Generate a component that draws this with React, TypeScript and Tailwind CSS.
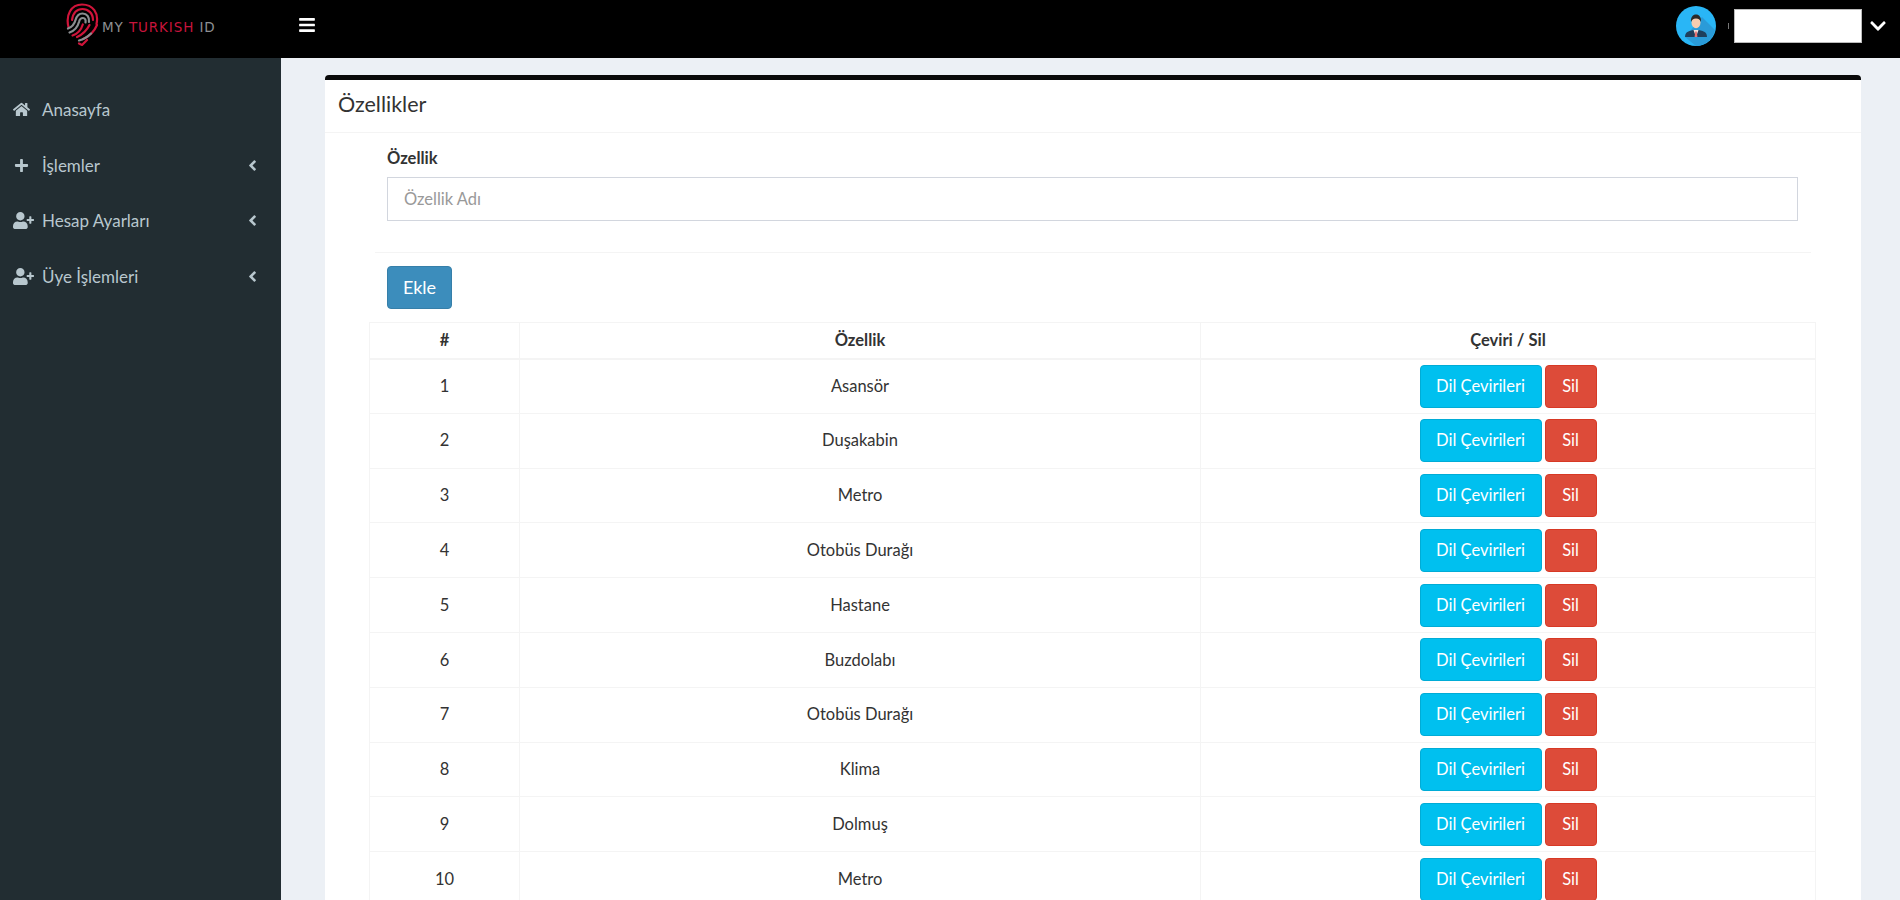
import { FaBars, FaChevronDown, FaHome, FaPlus, FaUserPlus, FaAngleLeft } from "react-icons/fa"

const features = [
    "Asansör",
    "Duşakabin",
    "Metro",
    "Otobüs Durağı",
    "Hastane",
    "Buzdolabı",
    "Otobüs Durağı",
    "Klima",
    "Dolmuş",
    "Metro",
]

const menu = [
    { label: "Anasayfa", icon: <FaHome className="text-[17px]" />, arrow: false },
    { label: "İşlemler", icon: <FaPlus className="text-[15px] ml-px" />, arrow: true },
    { label: "Hesap Ayarları", icon: <FaUserPlus className="text-[21px]" />, arrow: true },
    { label: "Üye İşlemleri", icon: <FaUserPlus className="text-[21px]" />, arrow: true },
]

function Logo() {
    return (
        <div className="flex items-center">
            <svg width="33" height="43" viewBox="0 0 33 43" fill="none" strokeLinecap="round" strokeWidth="2.200">
                {/* red outer ridges */}
                <path d="M2.500 24C-.5 12 5 1.500 16 1.500S33 10 30.500 21" stroke="#d0143a" />
                <path d="M6 17C7 10 11 6 16.500 6S27 10 27 17" stroke="#d0143a" />
                {/* grey middle ridges */}
                <path d="M2 25.500C6 24 8.500 21 9.500 17 11 12 13.500 10.500 16.500 10.500 21 10.500 23.500 14 23 19" stroke="#8b8d90" />
                <path d="M3.500 29.500C8 28 11.500 24.500 13 19 13.500 16.500 15 15 17 15 19 15 20 17 19.500 19.500" stroke="#8b8d90" />
                {/* red lower ridges */}
                <path d="M6.500 32.500C11 31 15 27.500 16.800 21.500" stroke="#d0143a" />
                <path d="M31 22C28.500 28 23 33.500 17 36" stroke="#d0143a" />
                <path d="M23.500 22C21 27 16.500 31.500 11 34" stroke="#d0143a" />
                {/* grey tip */}
                <path d="M13 37.500C17 36.500 21.500 34 25 30.500" stroke="#8b8d90" />
                <path d="M13 40.500L16 42 21 37" stroke="#d0143a" />
            </svg>
            <span className="ml-[3px] mt-[7px] text-[13.500px] leading-none tracking-[0.9px] font-['DejaVu_Sans'] whitespace-nowrap">
                <span className="text-[#8d8f92]">MY </span>
                <span className="text-[#c8143c]">TURKISH</span>
                <span className="text-[#8d8f92]"> ID</span>
            </span>
        </div>
    )
}

function Avatar() {
    return (
        <svg width="40" height="40" viewBox="0 0 40 40" className="block">
            <circle cx="20" cy="20" r="20" fill="#29b6f6" />
            {/* long shadow */}
            <path d="M26 11L39 24A20 20 0 0 1 20 40L9 31z" fill="#2a9bd8" />
            <path d="M9 31c0-5 4-7 11-7s11 2 11 7z" fill="#1f3f5c" />
            <path d="M17.500 24h5l-2.500 7z" fill="#f3e3de" />
            <path d="M19.200 25.500h1.600l.6 5.500h-2.800z" fill="#e57373" />
            <ellipse cx="20" cy="16.500" rx="4.500" ry="5.800" fill="#f6cdb0" />
            <path d="M15 16c-.5-5 2-7.500 5-7.500s5.500 2.500 5 7.500c-1-2-2-3.500-5-3.500s-4 1.500-5 3.500z" fill="#2a2a2a" />
        </svg>
    )
}

export default function App() {
    return (
        <div className="h-screen overflow-hidden flex flex-col bg-[#ecf0f5] text-[#333] font-['Lato','Noto_Sans',sans-serif]">
            {/* top bar */}
            <header className="h-[58px] shrink-0 bg-black flex items-center">
                <div className="w-[281px] shrink-0 pl-[66px] -mt-[9px]">
                    <Logo />
                </div>
                <button className="text-white text-[18px] ml-[17px] -mt-[8px]">
                    <FaBars />
                </button>
                <div className="ml-auto flex items-center pr-[13px] -mt-[6px]">
                    <Avatar />
                    <div className="ml-[12px] w-px h-[6px] bg-[#777]" />
                    <div className="ml-[5px] w-[128px] h-[34px] bg-white border border-[#bbb]" />
                    <FaChevronDown className="ml-[7px] text-white text-[18px]" />
                </div>
            </header>

            <div className="flex flex-1 min-h-0">
                {/* sidebar */}
                <aside className="w-[281px] shrink-0 bg-[#222d32] pt-[24px]">
                    {menu.map(m => (
                        <div key={m.label} className="h-[55.500px] flex items-center pl-[13px] pr-[20px] text-[#b8c7ce] text-[17px]">
                            <span className="w-[29px] shrink-0 flex">{m.icon}</span>
                            <span>{m.label}</span>
                            {m.arrow && <FaAngleLeft className="ml-auto text-[17px]" />}
                        </div>
                    ))}
                </aside>

                {/* content */}
                <main className="flex-1 min-w-0 pt-[17px] pl-[44px] pr-[39px]">
                    <div className="bg-white border-t-[5px] border-[#0a0a0a] rounded-t-[4px] h-[900px]">
                        <div className="h-[53px] flex items-center px-[13px] pb-[3px] border-b border-[#f4f4f4]">
                            <h3 className="text-[21.500px] leading-none">Özellikler</h3>
                        </div>

                        <div className="pl-[62px] pr-[63px]">
                            <label className="block mt-[14px] font-bold text-[16.500px] leading-[22px]">Özellik</label>
                            <input
                                placeholder="Özellik Adı"
                                className="mt-[8px] w-full h-[44px] border border-[#d2d6de] px-[16px] text-[16.500px] outline-none placeholder:text-[#999]"
                            />
                        </div>

                        <hr className="mt-[31px] mx-[50px] border-[#f4f4f4]" />

                        <div className="px-[62px] mt-[13px]">
                            <button className="w-[65px] h-[43px] bg-[#3c8dbc] border border-[#367fa9] rounded-[4px] text-white text-[18px]">
                                Ekle
                            </button>
                        </div>

                        <table className="mt-[13px] ml-[44px] w-[1447px] table-fixed border-collapse text-center text-[16.500px]">
                            <colgroup>
                                <col className="w-[150px]" />
                                <col className="w-[681px]" />
                                <col />
                            </colgroup>
                            <thead>
                                <tr className="h-[36px] font-bold">
                                    <th className="border-b-2 border border-[#f4f4f4]">#</th>
                                    <th className="border-b-2 border border-[#f4f4f4]">Özellik</th>
                                    <th className="border-b-2 border border-[#f4f4f4]">Çeviri / Sil</th>
                                </tr>
                            </thead>
                            <tbody>
                                {features.map((f, i) => (
                                    <tr key={i} className="h-[54.800px]">
                                        <td className="border border-[#f4f4f4]">{i + 1}</td>
                                        <td className="border border-[#f4f4f4]">{f}</td>
                                        <td className="border border-[#f4f4f4]">
                                            <div className="flex justify-center gap-[3px]">
                                                <button className="w-[122px] h-[43px] bg-[#00c0ef] border border-[#00acd6] rounded-[4px] text-white text-[16.500px]">
                                                    Dil Çevirileri
                                                </button>
                                                <button className="w-[52px] h-[43px] bg-[#dd4b39] border border-[#d73925] rounded-[4px] text-white text-[16.500px]">
                                                    Sil
                                                </button>
                                            </div>
                                        </td>
                                    </tr>
                                ))}
                            </tbody>
                        </table>
                    </div>
                </main>
            </div>
        </div>
    )
}
